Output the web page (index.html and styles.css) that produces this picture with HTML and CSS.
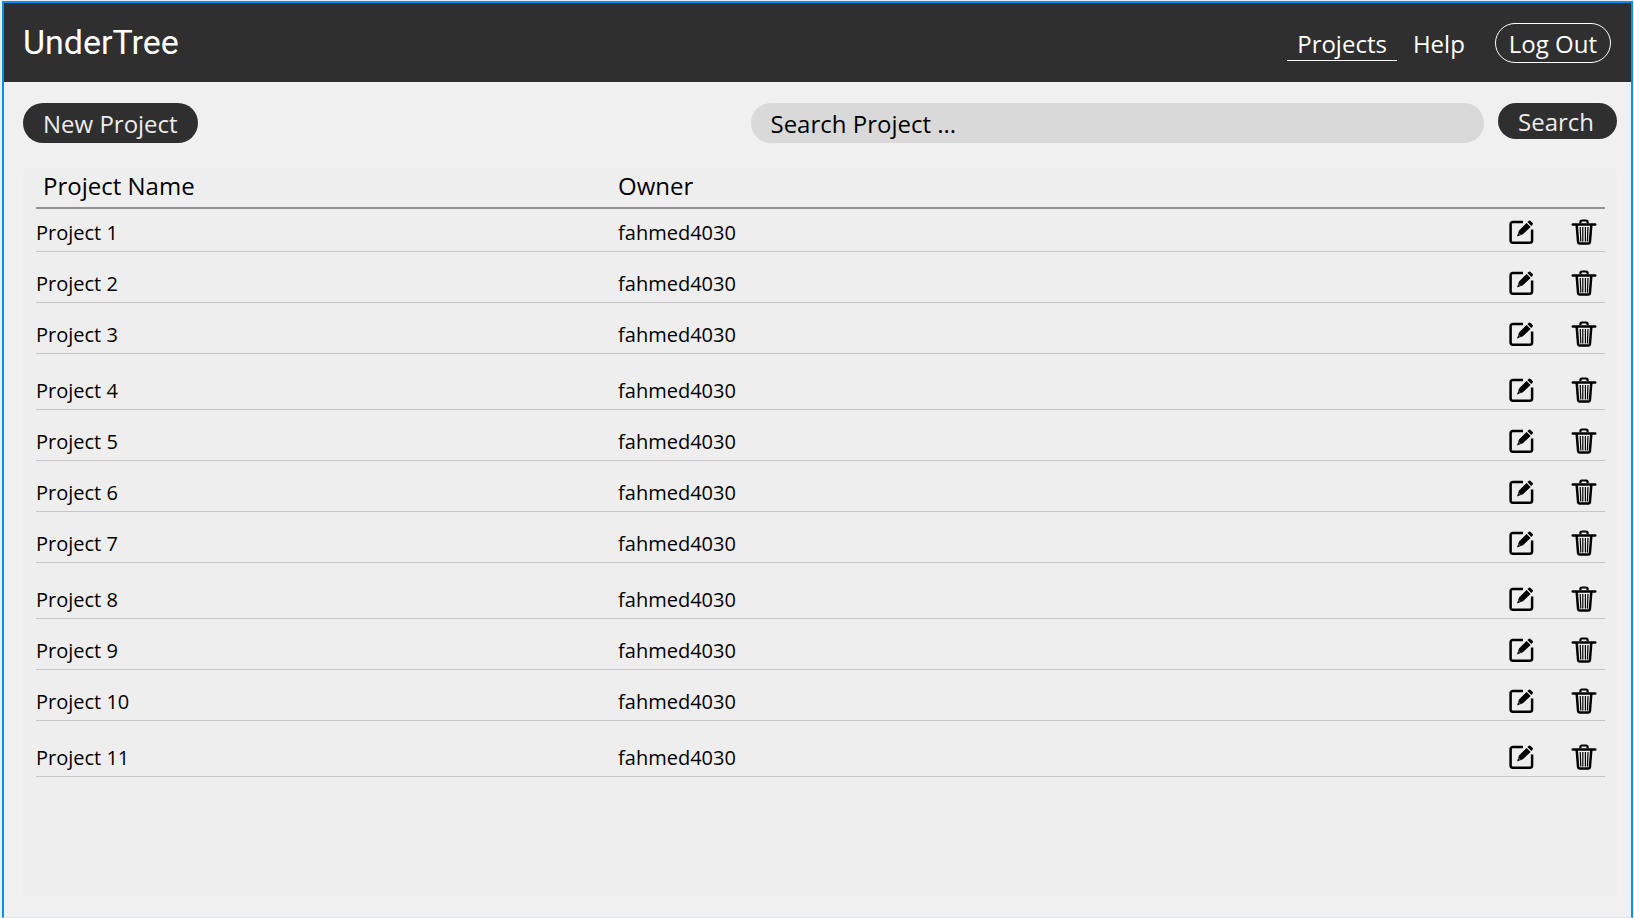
FILE: index.html
```html
<!DOCTYPE html>
<html lang="en">
<head>
<meta charset="utf-8">
<meta name="viewport" content="width=device-width, initial-scale=1">
<title>UnderTree</title>
<link rel="stylesheet" href="styles.css">
</head>
<body>
<svg class="sprite" aria-hidden="true">
  <symbol id="edit" viewBox="0 0 26 26">
    <path d="M15 3H4.800a2.200 2.200 0 0 0-2.200 2.200v16.400a2.200 2.200 0 0 0 2.200 2.200h17.100a2.200 2.200 0 0 0 2.200-2.200V10.500" fill="none" stroke="currentColor" stroke-width="2.500"/>
    <path d="M11 11.600 18.600 3.900l4 4-7.700 7.400-5.900 2.300zM19.400 3.100l1.500-1.400q.7-.6 1.400 0l2.400 2.400q.6.700 0 1.400l-1.400 1.500z" fill="currentColor"/>
    <path d="m10.500 14.100 1.700 1.700" stroke="#eee" stroke-width=".6"/>
  </symbol>
  <symbol id="trash" viewBox="0 0 26 26">
    <path d="M9.400 4.200V3q0-1.500 1.500-1.500h4.200q1.500 0 1.500 1.500v1.200" fill="none" stroke="currentColor" stroke-width="2.200"/>
    <path d="M1.800 5.400h22.400" stroke="currentColor" stroke-width="2.500" stroke-linecap="round"/>
    <path d="M5.700 6 7.100 23.200q.1 1.200 1.300 1.200h9.200q1.200 0 1.300-1.200L20.300 6" fill="none" stroke="currentColor" stroke-width="2.500"/>
    <path d="m9.200 8 .6 14.500M11.800 8v14.500M14.400 8v14.500M17 8l-.6 14.500" stroke="currentColor" stroke-width="1.200"/>
  </symbol>
</svg>
<div class="frame">
  <header class="topbar">
    <a class="brand" href="#">UnderTree</a>
    <nav class="nav">
      <a class="nav-link nav-link-active" href="#">Projects</a>
      <a class="nav-link" href="#">Help</a>
      <button class="logout" type="button">Log Out</button>
    </nav>
  </header>
  <main class="content">
    <div class="toolbar">
      <button class="pill new-project" type="button">New Project</button>
      <form class="search">
        <input class="search-input" type="text" placeholder="Search Project ..." aria-label="Search Project">
        <button class="pill search-button" type="button">Search</button>
      </form>
    </div>
    <section class="panel">
      <table class="projects">
        <thead>
          <tr><th class="col-name" scope="col">Project Name</th><th scope="col">Owner</th><th class="col-actions" aria-label="Actions"></th></tr>
        </thead>
        <tbody>
          <tr class="first"><td>Project 1</td><td>fahmed4030</td><td><div class="actions"><button type="button" aria-label="Edit Project 1"><svg><use href="#edit"/></svg></button><button type="button" aria-label="Delete Project 1"><svg><use href="#trash"/></svg></button></div></td></tr>
          <tr><td>Project 2</td><td>fahmed4030</td><td><div class="actions"><button type="button" aria-label="Edit Project 2"><svg><use href="#edit"/></svg></button><button type="button" aria-label="Delete Project 2"><svg><use href="#trash"/></svg></button></div></td></tr>
          <tr><td>Project 3</td><td>fahmed4030</td><td><div class="actions"><button type="button" aria-label="Edit Project 3"><svg><use href="#edit"/></svg></button><button type="button" aria-label="Delete Project 3"><svg><use href="#trash"/></svg></button></div></td></tr>
          <tr class="spaced"><td>Project 4</td><td>fahmed4030</td><td><div class="actions"><button type="button" aria-label="Edit Project 4"><svg><use href="#edit"/></svg></button><button type="button" aria-label="Delete Project 4"><svg><use href="#trash"/></svg></button></div></td></tr>
          <tr><td>Project 5</td><td>fahmed4030</td><td><div class="actions"><button type="button" aria-label="Edit Project 5"><svg><use href="#edit"/></svg></button><button type="button" aria-label="Delete Project 5"><svg><use href="#trash"/></svg></button></div></td></tr>
          <tr><td>Project 6</td><td>fahmed4030</td><td><div class="actions"><button type="button" aria-label="Edit Project 6"><svg><use href="#edit"/></svg></button><button type="button" aria-label="Delete Project 6"><svg><use href="#trash"/></svg></button></div></td></tr>
          <tr><td>Project 7</td><td>fahmed4030</td><td><div class="actions"><button type="button" aria-label="Edit Project 7"><svg><use href="#edit"/></svg></button><button type="button" aria-label="Delete Project 7"><svg><use href="#trash"/></svg></button></div></td></tr>
          <tr class="spaced"><td>Project 8</td><td>fahmed4030</td><td><div class="actions"><button type="button" aria-label="Edit Project 8"><svg><use href="#edit"/></svg></button><button type="button" aria-label="Delete Project 8"><svg><use href="#trash"/></svg></button></div></td></tr>
          <tr><td>Project 9</td><td>fahmed4030</td><td><div class="actions"><button type="button" aria-label="Edit Project 9"><svg><use href="#edit"/></svg></button><button type="button" aria-label="Delete Project 9"><svg><use href="#trash"/></svg></button></div></td></tr>
          <tr><td>Project 10</td><td>fahmed4030</td><td><div class="actions"><button type="button" aria-label="Edit Project 10"><svg><use href="#edit"/></svg></button><button type="button" aria-label="Delete Project 10"><svg><use href="#trash"/></svg></button></div></td></tr>
          <tr class="spaced"><td>Project 11</td><td>fahmed4030</td><td><div class="actions"><button type="button" aria-label="Edit Project 11"><svg><use href="#edit"/></svg></button><button type="button" aria-label="Delete Project 11"><svg><use href="#trash"/></svg></button></div></td></tr>
        </tbody>
      </table>
    </section>
  </main>
</div>
</body>
</html>
```
FILE: styles.css
```css
* { box-sizing: border-box; }

body {
  margin: 0;
  padding: 1px 1px 0 2px;
  min-height: 100vh;
  display: flex;
  background: #e9eef2;
  color: #000;
  font-family: "Open Sans", "Noto Sans", sans-serif;
  font-size: 24px;
}

button, input { font: inherit; }
button { cursor: pointer; }
a { color: inherit; text-decoration: none; }

.sprite { display: none; }

.frame {
  flex: 1;
  display: flex;
  flex-direction: column;
  background: #f0f0f0;
  border: 2px solid #0d8fee;
  border-bottom: 1px solid #dfe3e9;
}

.topbar {
  display: flex;
  align-items: center;
  justify-content: space-between;
  height: 79px;
  padding: 0 20px 0 19px;
  background: #2f2f2f;
  color: #fff;
}

.brand {
  padding-bottom: 2px;
  font-family: Roboto, sans-serif;
  font-size: 34px;
  line-height: 40px;
}

.nav {
  display: flex;
  align-items: center;
}

.nav-link {
  margin-right: 6px;
  padding: 3px 10px 0;
  border-bottom: 1px solid transparent;
  line-height: 32px;
}

.nav-link-active { border-bottom-color: #fff; }

.logout {
  height: 40px;
  margin-left: 14px;
  padding: 2px 13px 0;
  border: 1px solid #fff;
  border-radius: 20px;
  background: none;
  color: #fff;
}

.content {
  flex: 1;
  display: flex;
  flex-direction: column;
  padding: 21px 14px 20px 19px;
}

.toolbar {
  display: flex;
  justify-content: space-between;
  align-items: flex-start;
}

.pill {
  border: 0;
  border-radius: 20px;
  background: #2f2f2f;
  color: #ececec;
}

.new-project {
  height: 40px;
  padding: 0 20px;
}

.search {
  display: flex;
  align-items: flex-start;
  gap: 14px;
  width: 54.3%;
}

.search-input {
  flex: 1;
  min-width: 0;
  height: 40px;
  padding: 0 19px;
  border: 0;
  border-radius: 20px;
  background: #d9d9d9;
  color: #000;
}

.search-input::placeholder { color: #000; opacity: 1; }

.search-button {
  height: 36px;
  padding: 0 23px 0 20px;
}

.panel {
  flex: 1;
  margin-top: 26px;
  padding: 0 12px 0 13px;
  background: #eeeeee;
}

.projects {
  width: 100%;
  table-layout: fixed;
  border-collapse: separate;
  border-spacing: 0;
}

.projects th {
  height: 40px;
  padding: 0 0 4px;
  border-bottom: 2px solid #929292;
  font-weight: 400;
  text-align: left;
  line-height: 32px;
}

.projects .col-name { width: 37.1%; padding-left: 7px; }
.projects .col-actions { width: 160px; }

.projects td {
  height: 51px;
  padding: 0 0 4px;
  border-bottom: 1px solid #c6c6c6;
  font-size: 20px;
  line-height: 28px;
  vertical-align: bottom;
}

.projects .first td { height: 43px; }
.projects .spaced td { height: 56px; }

.actions {
  display: flex;
  justify-content: flex-end;
  gap: 37px;
  padding: 0 8px 2px 0;
}

.actions button {
  display: flex;
  padding: 0;
  border: 0;
  background: none;
  color: #000;
}

.actions svg { width: 26px; height: 26px; }
```
